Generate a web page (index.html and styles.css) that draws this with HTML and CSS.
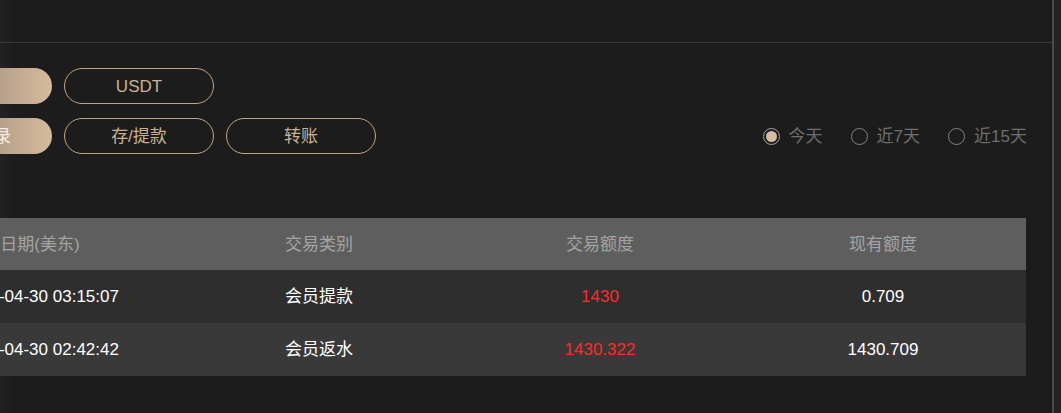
FILE: index.html
```html
<!DOCTYPE html>
<html lang="zh-CN">
<head>
<meta charset="utf-8">
<title>交易记录</title>
<link rel="stylesheet" href="styles.css">
</head>
<body>
<div class="frame">
  <div class="panel">
    <div class="topbar"></div>
    <div class="content">
      <div class="btn-row">
        <button class="pill pill-active">CNY</button>
        <button class="pill">USDT</button>
      </div>
      <div class="btn-row second">
        <div class="btn-group">
          <button class="pill pill-active">交易记录</button>
          <button class="pill">存/提款</button>
          <button class="pill">转账</button>
        </div>
        <div class="radios">
          <label class="radio checked"><span class="dot"></span><span>今天</span></label>
          <label class="radio"><span class="dot"></span><span>近7天</span></label>
          <label class="radio"><span class="dot"></span><span>近15天</span></label>
        </div>
      </div>
      <div class="table">
        <div class="tr head">
          <div class="td">日期(美东)</div>
          <div class="td">交易类别</div>
          <div class="td">交易额度</div>
          <div class="td">现有额度</div>
        </div>
        <div class="tr odd">
          <div class="td">2025-04-30 03:15:07</div>
          <div class="td">会员提款</div>
          <div class="td red">1430</div>
          <div class="td">0.709</div>
        </div>
        <div class="tr even">
          <div class="td">2025-04-30 02:42:42</div>
          <div class="td">会员返水</div>
          <div class="td red">1430.322</div>
          <div class="td">1430.709</div>
        </div>
      </div>
    </div>
  </div>
  <div class="edge"></div>
</div>
</body>
</html>
```

FILE: styles.css
```css
html, body {
  margin: 0;
  padding: 0;
  background: #1c1c1c;
  overflow: hidden;
}

body {
  font-family: "Liberation Sans", Arial, "Noto Sans CJK SC", sans-serif;
  font-size: 17px;
  color: #fff;
}

.frame {
  display: flex;
  width: 1061px;
  height: 413px;
  background: linear-gradient(135deg, #202020 0%, #1c1c1c 25%, #1c1c1c 85%, #1f1f1f 86%, #1c1c1c 100%);
}

.panel {
  flex: 0 0 1052px;
  overflow: hidden;
  background: linear-gradient(to right, #222 0, #1c1c1c 14px);
}

.edge {
  flex: 1;
  border-left: 2px solid #4a4a4a;
  background: #242424;
}

.topbar {
  height: 42px;
  border-bottom: 1px solid #3c3a33;
}

.content {
  margin-left: -98px;
  padding-top: 25px;
}

.btn-row {
  display: flex;
  gap: 12px;
}

.btn-row.second {
  margin-top: 14px;
  justify-content: space-between;
  align-items: center;
  width: 1125px;
}

.btn-group {
  display: flex;
  gap: 12px;
}

.pill {
  width: 150px;
  height: 36px;
  box-sizing: border-box;
  border: 1px solid #c4a582;
  border-radius: 18px;
  background: transparent;
  color: #cbb294;
  font-family: "Liberation Sans", Arial, "Noto Sans CJK SC", sans-serif;
  font-size: 17px;
  line-height: 1;
  padding: 0;
  cursor: pointer;
}

.pill-active {
  border: none;
  background: linear-gradient(to right, #6f6255 0%, #b7a18a 65%, #d6ba9c 100%);
  color: #f1ebe4;
}

.radios {
  display: flex;
  gap: 28px;
  color: #6e6e6e;
}

.radio {
  display: flex;
  align-items: center;
  gap: 9px;
  line-height: 1;
}

.dot {
  width: 17px;
  height: 17px;
  box-sizing: border-box;
  border: 1.5px solid #858585;
  border-radius: 50%;
  display: flex;
  align-items: center;
  justify-content: center;
}

.radio.checked .dot {
  border-color: #a5a5a5;
}

.radio.checked .dot::after {
  content: "";
  width: 11px;
  height: 11px;
  border-radius: 50%;
  background: #d9bc9f;
}

.table {
  margin-top: 64px;
  width: 1124px;
}

.tr {
  display: grid;
  grid-template-columns: 276px 282px 280px 286px;
  height: 53px;
  align-items: center;
}

.tr.head {
  height: 52px;
  background: #5e5e5e;
  color: #a4a4a4;
}

.tr.odd {
  background: #2e2e2e;
}

.tr.even {
  background: #393939;
}

.td {
  text-align: center;
  line-height: 1;
  white-space: nowrap;
}

.red {
  color: #ff2a2a;
}
```
